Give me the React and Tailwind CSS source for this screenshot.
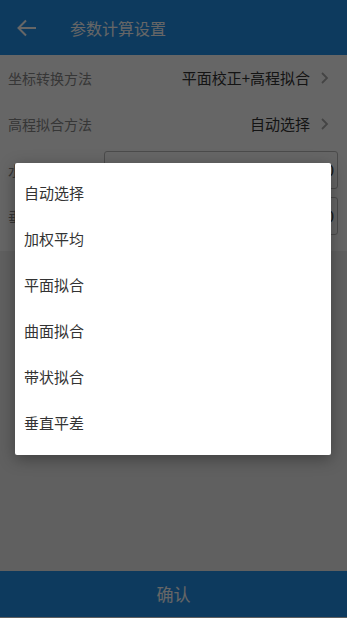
import React from 'react'

const options = ['自动选择', '加权平均', '平面拟合', '曲面拟合', '带状拟合', '垂直平差']

const Chevron = () => (
  <svg className="w-[10px] h-[14px] ml-[10px]" viewBox="0 0 10 14" fill="none">
    <path d="M2 2l5 5-5 5" stroke="#aaa" strokeWidth="1.8" />
  </svg>
)

const App = () => {
  return (
    <div
      className="relative w-[347px] h-[618px] overflow-hidden bg-[#f0f0f0] flex flex-col"
      style={{ fontFamily: '"Noto Sans CJK SC", "Noto Sans", sans-serif' }}
    >
      {/* Header */}
      <div className="h-[55px] shrink-0 bg-[#2192ec] flex items-center">
        <svg className="w-[20px] h-[18px] ml-[17px]" viewBox="0 0 20 18" fill="none">
          <path d="M19 9H2M9 1.5L1.5 9 9 16.5" stroke="#fff" strokeWidth="2" />
        </svg>
        <span className="ml-[33px] text-[16px] text-white">参数计算设置</span>
      </div>

      {/* Settings */}
      <div className="bg-white">
        <div className="h-[46px] flex items-center justify-between pl-[8px] pr-[17px]">
          <span className="text-[14px] text-[#888]">坐标转换方法</span>
          <div className="flex items-center">
            <span className="text-[15px] text-[#333]">平面校正+高程拟合</span>
            <Chevron />
          </div>
        </div>
        <div className="h-[46px] flex items-center justify-between pl-[8px] pr-[17px]">
          <span className="text-[14px] text-[#888]">高程拟合方法</span>
          <div className="flex items-center">
            <span className="text-[15px] text-[#333]">自动选择</span>
            <Chevron />
          </div>
        </div>
        <div className="flex items-center h-[46px] pl-[8px] pr-[9px]">
          <span className="w-[96px] text-[14px] text-[#888]">水平精度限差</span>
          <div className="flex-1 h-[38px] border border-[#bbb] rounded-[3px] flex items-center justify-end pr-[3px] text-[15px] text-[#333]">
            0
          </div>
        </div>
        <div className="flex items-center h-[46px] pl-[8px] pr-[9px]">
          <span className="w-[96px] text-[14px] text-[#888]">垂直精度限差</span>
          <div className="flex-1 h-[38px] border border-[#bbb] rounded-[3px] flex items-center justify-end pr-[3px] text-[15px] text-[#333]">
            0
          </div>
        </div>
        <div className="h-[12px]" />
      </div>

      <div className="flex-1" />

      {/* Confirm */}
      <div className="h-[46px] mb-[1px] shrink-0 bg-[#2192ec] flex items-center justify-center text-[17px] text-white">
        确认
      </div>

      {/* Dim overlay + dialog */}
      <div className="absolute inset-0 bg-black/60">
        <div className="absolute left-[15px] top-[163px] w-[316px] bg-white rounded-[2px] shadow-[0_4px_16px_rgba(0,0,0,0.35)] pt-[7px] pb-[9px]">
          {options.map((o) => (
            <div key={o} className="h-[46px] flex items-center pl-[9px] text-[15px] text-[#333]">
              {o}
            </div>
          ))}
        </div>
      </div>
    </div>
  )
}

export default App
